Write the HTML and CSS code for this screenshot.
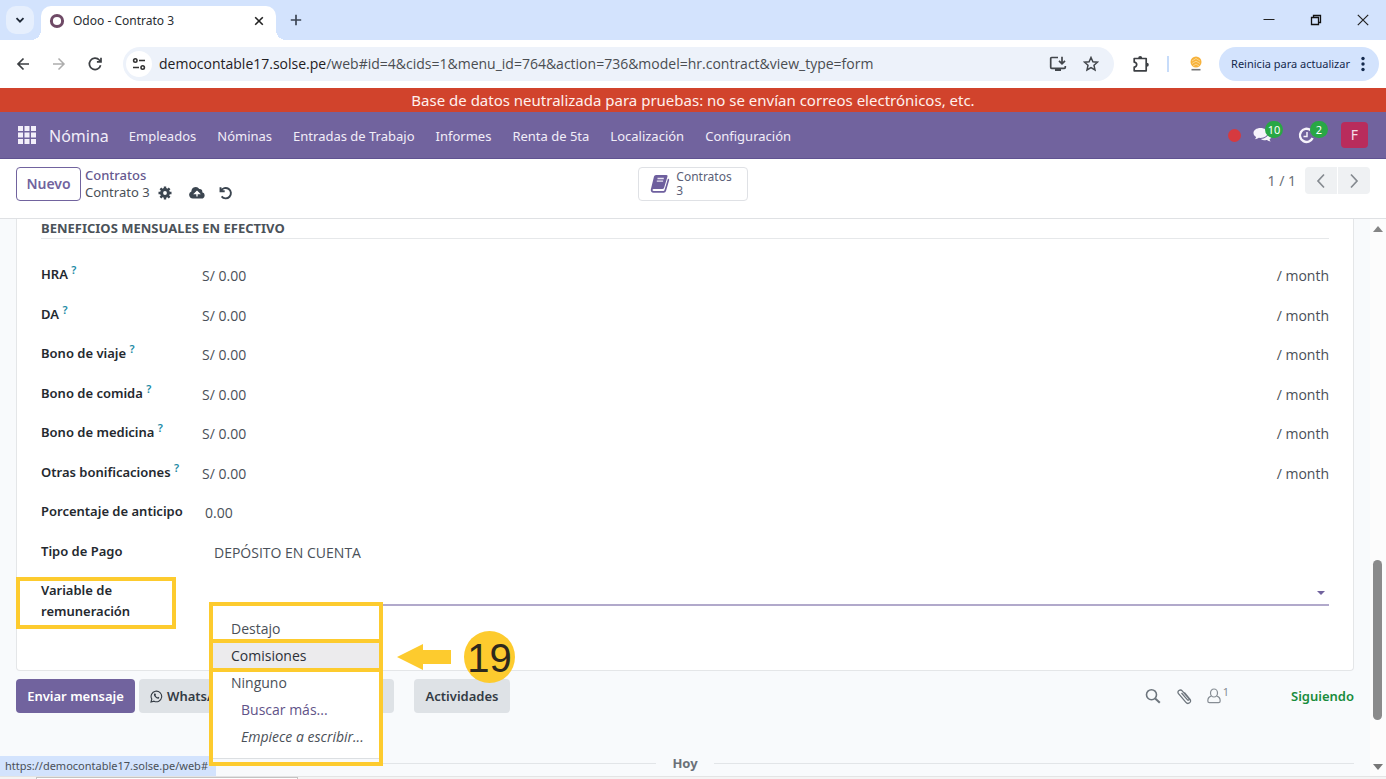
FILE: index.html
```html
<!DOCTYPE html>
<html lang="es">
<head>
<meta charset="utf-8">
<meta name="viewport" content="width=device-width, initial-scale=1">
<title>Odoo - Contrato 3</title>
<link rel="stylesheet" href="styles.css">
</head>
<body>
<div class="tabstrip">
  <button class="tab-search" aria-label="Buscar pestañas"><svg width="12" height="12" viewBox="0 0 12 12"><path d="M2.500 4.200 6 7.700l3.500-3.500" fill="none" stroke="#1f2937" stroke-width="1.800"/></svg></button>
  <div class="tab">
    <svg width="16" height="16" viewBox="0 0 16 16"><circle cx="8" cy="8" r="5.600" fill="none" stroke="#6f4a66" stroke-width="3"/></svg>
    <span class="tab-title">Odoo - Contrato 3</span>
    <button class="tab-close" aria-label="Cerrar"><svg width="10" height="10" viewBox="0 0 10 10"><path d="m1.200 1.200 7.600 7.600m0-7.600L1.200 8.800" stroke="#222" stroke-width="1.600"/></svg></button>
  </div>
  <button class="new-tab" aria-label="Nueva pestaña"><svg width="12" height="12" viewBox="0 0 12 12"><path d="M6 .8v10.400M.8 6h10.400" stroke="#3c4654" stroke-width="1.700"/></svg></button>
  <div class="window-buttons">
    <button aria-label="Minimizar"><svg width="12" height="12" viewBox="0 0 12 12"><path d="M.5 5.500h11" stroke="#222" stroke-width="1"/></svg></button>
    <button aria-label="Restaurar"><svg width="12" height="12" viewBox="0 0 12 12"><path d="M1.500 3.500h7v7h-7zM3.500 3.500v-2h7v7h-2" fill="none" stroke="#111" stroke-width="1.300"/></svg></button>
    <button aria-label="Cerrar ventana"><svg width="12" height="12" viewBox="0 0 12 12"><path d="m.8.800 10.400 10.400m0-10.400L.8 11.200" stroke="#222" stroke-width="1.200"/></svg></button>
  </div>
</div>
<div class="toolbar">
  <button aria-label="Atrás"><svg width="16" height="16" viewBox="0 0 16 16"><path d="M14 8H3m5.500-5.500L3 8l5.500 5.500" fill="none" stroke="#3c3f43" stroke-width="1.700"/></svg></button>
  <button aria-label="Adelante"><svg width="16" height="16" viewBox="0 0 16 16"><path d="M2 8h11M7.500 2.500 13 8l-5.500 5.500" fill="none" stroke="#adadad" stroke-width="1.500"/></svg></button>
  <button aria-label="Recargar"><svg width="16" height="16" viewBox="0 0 16 16"><path d="M13.600 9.200A5.700 5.700 0 1 1 12.300 4L14 5.700M14 1.800v4.100H9.900" fill="none" stroke="#3c3f43" stroke-width="1.700"/></svg></button>
  <div class="omnibox">
    <span class="site-info"><svg width="16" height="16" viewBox="0 0 16 16"><g fill="none" stroke="#333" stroke-width="1.600"><circle cx="4.300" cy="4.500" r="1.700"/><path d="M8 4.500h6M2 11.500h6"/><circle cx="11.700" cy="11.500" r="1.700"/></g></svg></span>
    <div class="url"><span class="host">democontable17.solse.pe</span>/web#id=4&amp;cids=1&amp;menu_id=764&amp;action=736&amp;model=hr.contract&amp;view_type=form</div>
    <button aria-label="Instalar"><svg width="18" height="18" viewBox="0 0 18 18"><path d="M9 2.500H2.700q-1 0-1 1v8.800q0 1 1 1h12.600q1 0 1-1V11M13 1.800v6.500M10 5.800l3 3 3-3" fill="none" stroke="#42464b" stroke-width="1.700"/><path d="M6 14h6v2H6z" fill="#42464b"/></svg></button>
    <button aria-label="Marcador"><svg width="16" height="16" viewBox="0 0 16 16"><path d="m8 1.500 1.900 4.300 4.600.4-3.500 3.100 1 4.600L8 11.500l-4 2.400 1-4.600-3.500-3.100 4.600-.4z" fill="none" stroke="#42464b" stroke-width="1.500"/></svg></button>
  </div>
  <button aria-label="Extensiones"><svg width="18" height="18" viewBox="0 0 18 18"><path d="M2.200 3.500h12v12.300h-12v-3.700a2.500 2.500 0 0 0 0-5z" fill="none" stroke="#3c3f43" stroke-width="1.700" stroke-linejoin="round"/><path d="M6.200 3a2 2 0 0 1 4 0zM14.800 7.700a2 2 0 0 1 0 4z" fill="#3c3f43"/></svg></button>
  <span class="divider"></span>
  <svg class="profile" width="18" height="18" viewBox="0 0 18 18"><circle cx="9" cy="7" r="5.500" fill="#f7b23b"/><path d="m5 6 4-2.500L13 6M5 8.500l4-2.300 4 2.300M6 11l3-2 3 2" fill="none" stroke="#fbd58a"/><path d="M4.500 14.700h9" stroke="#777" stroke-width="1.600"/></svg>
  <button class="restart">Reinicia para actualizar<svg width="4" height="16" viewBox="0 0 4 16"><g fill="#14294d"><circle cx="2" cy="2.500" r="1.700"/><circle cx="2" cy="8" r="1.700"/><circle cx="2" cy="13.500" r="1.700"/></g></svg></button>
</div>
<div class="banner">Base de datos neutralizada para pruebas: no se envían correos electrónicos, etc.</div>
<nav class="navbar">
  <button class="apps" aria-label="Aplicaciones"><svg width="18" height="18" viewBox="0 0 18 18"><path d="M0 0h5v5H0zM6.500 0h5v5h-5zM13 0h5v5h-5zM0 6.500h5v5H0zM6.500 6.500h5v5h-5zM13 6.500h5v5h-5zM0 13h5v5H0zM6.500 13h5v5h-5zM13 13h5v5h-5z" fill="#f3effa"/></svg></button>
  <a class="brand" href="#">Nómina</a>
  <div class="menu">
    <a href="#">Empleados</a><a href="#">Nóminas</a><a href="#">Entradas de Trabajo</a><a href="#">Informes</a><a href="#">Renta de 5ta</a><a href="#">Localización</a><a href="#">Configuración</a>
  </div>
  <div class="systray">
    <span class="record-dot"></span>
    <button class="tray" aria-label="Mensajes"><svg width="19" height="17" viewBox="0 0 19 17"><path d="M7.500 1C3.400 1 .5 3.300.5 6c0 1.700 1 3.100 2.700 4-.2.900-.8 1.600-1.400 2.200 1.500 0 3-.6 4-1.400l1.700.1c4 0 7-2.200 7-4.900S11.500 1 7.500 1z" fill="#f6f3fb"/><path d="M15.600 5.500c1.600.8 2.900 2 2.900 3.700 0 1.400-.8 2.500-2 3.200.2.800.6 1.500 1.200 2-1.500 0-2.800-.5-3.700-1.300-2.500.3-4.800-.1-6.200-1.200 4.300 0 7.800-2.700 7.800-6.400z" fill="#f6f3fb"/></svg><span class="badge">10</span></button>
    <button class="tray" aria-label="Actividades"><svg width="17" height="17" viewBox="0 0 17 17"><path d="M12.500 3A6.600 6.600 0 1 0 14.600 11" fill="none" stroke="#f6f3fb" stroke-width="2.400"/><path d="M9 5v4.500H5.500" fill="none" stroke="#f6f3fb" stroke-width="1.500"/></svg><span class="badge">2</span></button>
    <button class="avatar">F</button>
  </div>
</nav>
<header class="control-panel">
  <div class="cp-left">
    <button class="new-button">Nuevo</button>
    <div class="breadcrumb">
      <a href="#">Contratos</a>
      <div class="current"><span>Contrato 3</span>
        <button aria-label="Acciones"><svg width="14" height="14" viewBox="0 0 14 14"><circle cx="7" cy="7" r="3.400" fill="none" stroke="#3b4550" stroke-width="3"/><path d="M7 .5v2.500M7 11v2.500M.5 7H3M11 7h2.500M2.400 2.400l1.800 1.800M9.800 9.800l1.800 1.800M11.600 2.400 9.800 4.200M4.200 9.800l-1.800 1.800" stroke="#3b4550" stroke-width="2.400"/></svg></button>
        <button class="cloud" aria-label="Guardar"><svg width="16" height="13" viewBox="0 0 16 13"><path d="M4 12.500A3.700 3.700 0 0 1 2.400 5.400 4.300 4.300 0 0 1 10.300 3a2.500 2.500 0 0 1 2.900 3.200 3.200 3.200 0 0 1-.7 6.300z" fill="#3b4550"/><path d="M8 10.500v-4M5.700 7.600 8 5.300l2.300 2.300z" fill="#fff" stroke="#fff" stroke-width="1.300"/></svg></button>
        <button aria-label="Descartar"><svg width="14" height="14" viewBox="0 0 14 14"><path d="M1.500 1.300v4h4.200M2 5a5.200 5.200 0 1 1 .6 5.400" fill="none" stroke="#3b4550" stroke-width="1.900"/></svg></button>
      </div>
    </div>
  </div>
  <button class="stat-button"><svg width="20" height="20" viewBox="0 0 20 20"><path d="M6 1h10.500q1.500 0 1 1.500l-3.300 11q-.4 1.500-2 1.500H3.500q-1.300.2-1 1.300.2.700 1.300.7h9.600q.8 0 1-.8L18 4.500q1.500.5 1.200 1.600L16 17q-.5 1.700-2.200 1.700H3.500Q.5 18.500.8 15.500L4 2.600Q4.400 1 6 1z" fill="#6e5f9e"/><path d="M7.500 4.500h6.300M6.800 7.200h6.300" stroke="#e8e4f2" stroke-width="1.300"/></svg><span class="stat"><span>Contratos</span><span>3</span></span></button>
  <div class="pager"><span>1 / 1</span><div class="pager-buttons"><button aria-label="Anterior"><svg width="10" height="16" viewBox="0 0 10 16"><path d="M8 1.500 2 8l6 6.500" fill="none" stroke="#858a90" stroke-width="1.700"/></svg></button><button aria-label="Siguiente"><svg width="10" height="16" viewBox="0 0 10 16"><path d="m2 1.500 6 6.500-6 6.500" fill="none" stroke="#858a90" stroke-width="1.700"/></svg></button></div></div>
</header>
<main class="content">
  <div class="page">
    <form class="sheet">
      <h2>Beneficios mensuales en efectivo</h2>
      <div class="fields">
        <div class="row"><label for="hra">HRA <sup>?</sup></label><input id="hra" value="S/ 0.00"><span class="unit">/ month</span></div>
        <div class="row"><label for="da">DA <sup>?</sup></label><input id="da" value="S/ 0.00"><span class="unit">/ month</span></div>
        <div class="row"><label for="viaje">Bono de viaje <sup>?</sup></label><input id="viaje" value="S/ 0.00"><span class="unit">/ month</span></div>
        <div class="row"><label for="comida">Bono de comida <sup>?</sup></label><input id="comida" value="S/ 0.00"><span class="unit">/ month</span></div>
        <div class="row"><label for="medicina">Bono de medicina <sup>?</sup></label><input id="medicina" value="S/ 0.00"><span class="unit">/ month</span></div>
        <div class="row"><label for="otras">Otras bonificaciones <sup>?</sup></label><input id="otras" value="S/ 0.00"><span class="unit">/ month</span></div>
        <div class="row"><label for="anticipo">Porcentaje de anticipo</label><input id="anticipo" class="number" value="0.00"></div>
        <div class="row"><label for="pago">Tipo de Pago</label><select id="pago"><option>DEPÓSITO EN CUENTA</option></select></div>
      </div>
      <div class="variable-row">
        <label for="variable">Variable de remuneración</label>
        <div class="combo">
          <input id="variable" role="combobox" aria-expanded="true" aria-controls="opciones">
          <svg width="8" height="4" viewBox="0 0 8 4"><path d="M0 0h8L4 4z" fill="#71639e"/></svg>
          <ul class="dropdown" id="opciones" role="listbox">
            <li role="option">Destajo</li>
            <li role="option" class="active" aria-selected="true">Comisiones</li>
            <li role="option">Ninguno</li>
            <li class="more">Buscar más...</li>
            <li class="hint">Empiece a escribir...</li>
          </ul>
          <div class="callout"><svg width="54" height="26" viewBox="0 0 54 26"><path d="M0 13 26 0v6h28v14H26v6z" fill="#fdcb2e"/></svg><span>19</span></div>
        </div>
      </div>
    </form>
    <section class="chatter">
      <button class="primary">Enviar mensaje</button>
      <button class="whatsapp"><svg width="13" height="13" viewBox="0 0 13 13"><path d="M1 12l.8-2.900A5.300 5.300 0 1 1 4 11.200z" fill="none" stroke="#333b44" stroke-width="1.100"/><path d="M4.300 3.500c-.8 1-.3 2.300.9 3.600s2.700 2 3.700 1.300l.4-1-1.300-.7-.7.700C6.500 7 5.900 6.400 5.500 5.600l.5-.7-.6-1.400z" fill="#333b44"/></svg>WhatsApp</button>
      <button class="note"></button>
      <button class="activities">Actividades</button>
      <div class="chatter-tools">
        <button aria-label="Buscar"><svg width="16" height="16" viewBox="0 0 16 16"><circle cx="6.500" cy="6.700" r="5" fill="none" stroke="#6d757d" stroke-width="1.600"/><path d="m10.200 10.500 4.600 4.300" stroke="#6d757d" stroke-width="2"/></svg></button>
        <button aria-label="Adjuntar"><svg width="16" height="17" viewBox="0 0 16 17"><path d="m5.500 5 6 6.800c.8 1 2.200-.2 1.400-1.200L6.200 2.900C4.400.8.500 3.200 2.500 5.700l7.200 8.500c2.500 2.900 6.500-.2 4.200-3L8.300 4.500" fill="none" stroke="#6d757d" stroke-width="1.300"/></svg></button>
        <button class="followers" aria-label="Seguidores"><svg width="14" height="16" viewBox="0 0 14 16"><path d="M4.300 8.200C.8 9 .8 11.500.8 13q0 1.700 1.700 1.700h9q1.700 0 1.700-1.700c0-1.500 0-4-3.500-4.800" fill="none" stroke="#868d94" stroke-width="1.200"/><ellipse cx="7" cy="5" rx="3.500" ry="4" fill="none" stroke="#868d94" stroke-width="1.200"/></svg><sup>1</sup></button>
        <button class="following">Siguiendo</button>
      </div>
    </section>
    <div class="day"><span>Hoy</span></div>
  </div>
  <div class="scrollbar"><svg width="10" height="6" viewBox="0 0 10 6"><path d="M0 6h10L5 0z" fill="#858585"/></svg><span class="thumb"></span><svg width="10" height="6" viewBox="0 0 10 6"><path d="M0 0h10L5 6z" fill="#777"/></svg></div>
  <div class="status-url">https://democontable17.solse.pe/web#</div>
</main>
<footer class="edge"></footer>
</body>
</html>
```

FILE: styles.css
```css
*, *::before, *::after { box-sizing: border-box; }
body {
  margin: 0;
  height: 100vh;
  display: flex;
  flex-direction: column;
  overflow: hidden;
  background: #fff;
  color: #4a5058;
  font: 14px/20px "Noto Sans", "Open Sans", sans-serif;
}
button, input, select { font: inherit; color: inherit; border: 0; background: none; padding: 0; margin: 0; }
button { display: flex; align-items: center; justify-content: center; flex: none; }
input, select { outline: 0; appearance: none; min-width: 0; }
a { color: inherit; text-decoration: none; }
svg { display: block; flex: none; }

.tabstrip { flex: none; height: 40px; display: flex; align-items: center; background: #d3e3fd; padding: 0 17px 0 6px; }
.tab-search { width: 28px; height: 28px; border-radius: 10px; background: #e6effd; }
.tab { align-self: stretch; margin: 6px 0 0 7px; width: 235px; display: flex; align-items: center; padding: 0 12px 4px 8px; background: #fff; border-radius: 10px 10px 0 0; position: relative; }
.tab::before, .tab::after { content: ""; position: absolute; bottom: 0; width: 10px; height: 10px; }
.tab::before { right: 100%; background: radial-gradient(circle at 0 0, transparent 10px, #fff 10px); }
.tab::after { left: 100%; background: radial-gradient(circle at 100% 0, transparent 10px, #fff 10px); }
.tab-title { flex: 1; margin-left: 8px; font-size: 12px; color: #2a2e33; }
.new-tab { width: 28px; height: 28px; margin-left: 6px; }
.window-buttons { margin-left: auto; display: flex; gap: 35px; }

.toolbar { flex: none; height: 48px; display: flex; align-items: center; padding: 0 7px 0 15px; }
.toolbar > button + button { margin-left: 20px; }
.omnibox { flex: 1; min-width: 0; height: 34px; margin: 0 18px 0 20px; padding: 0 15px 0 3px; display: flex; align-items: center; gap: 16px; border-radius: 17px; background: #edf2fa; }
.site-info { width: 26px; height: 26px; border-radius: 50%; background: #fff; display: flex; align-items: center; justify-content: center; }
.url { flex: 1; margin-left: -9px; color: #4a4d51; font-family: "Open Sans", sans-serif; white-space: nowrap; overflow: hidden; }
.host { color: #1f2023; }
.divider { width: 2px; height: 16px; margin: 0 18px 0 17px; background: #c7dcfa; }
.restart { height: 34px; margin-left: 14px; padding: 0 14px 0 12px; gap: 11px; border-radius: 17px; background: #d3e3fd; color: #14294d; font-size: 11px; }

.banner { flex: none; height: 24px; line-height: 25px; font-size: 15px; text-align: center; background: #d1432c; color: #fff0ec; }

.navbar { flex: none; height: 47px; display: flex; align-items: center; padding: 0 18px; background: #71639e; border-bottom: 1px solid #5f5291; color: #f1edf8; }
.brand { margin-left: 13px; padding-top: 2px; font-size: 16px; }
.menu { display: flex; gap: 21px; margin-left: 20px; padding-top: 2px; font-size: 13px; white-space: nowrap; }
.systray { margin-left: auto; display: flex; align-items: center; }
.record-dot { width: 13px; height: 13px; border-radius: 50%; background: #d63a3f; margin-right: 12px; }
.tray { position: relative; margin-right: 26px; }
.badge { position: absolute; left: 12px; top: -6px; min-width: 18px; height: 17px; border-radius: 9px; background: #28a745; color: #fff; font-size: 11px; line-height: 17px; text-align: center; }
.avatar { width: 27px; height: 26px; border-radius: 4px; background: #b92c5c; color: #f5dde6; }

.control-panel { flex: none; height: 60px; display: grid; grid-template-columns: 1fr auto 1fr; align-items: start; padding: 8px 16px 0; border-bottom: 1px solid #dfe1e4; }
.cp-left { display: flex; gap: 4px; }
.new-button { width: 65px; height: 34px; border: 1px solid #71639e; border-radius: 4px; color: #71639e; font-weight: 600; }
.breadcrumb { font-size: 13px; line-height: 17px; }
.breadcrumb a { color: #66598f; font-weight: 500; }
.current { display: flex; align-items: center; }
.current button { margin-left: 8px; }
.current .cloud { margin: 0 6px 0 17px; }
.stat-button { height: 34px; padding: 0 15px 0 11px; gap: 6px; border: 1px solid #dfe1e5; border-radius: 4px; color: #5b5f78; }
.stat { display: flex; flex-direction: column; font-size: 12px; line-height: 14px; text-align: left; }
.pager { justify-self: end; display: flex; align-items: center; gap: 9px; color: #6b7077; }
.pager-buttons { display: flex; gap: 1px; border-radius: 4px; overflow: hidden; }
.pager-buttons button { width: 32px; height: 27px; background: #eff1f3; }

.content { flex: 1; min-height: 0; display: flex; position: relative; background: #f8fafc; }
.page { flex: 1; min-width: 0; display: flex; flex-direction: column; padding-left: 16px; }
.sheet { flex: 1; min-height: 0; display: flex; flex-direction: column; margin-right: 16px; padding: 0 24px; background: #fff; border: 1px solid #e4e6e8; border-top: 0; border-radius: 0 0 4px 4px; }
.sheet h2 { margin: 0 0 17px; height: 20px; border-bottom: 1px solid #e6e8ea; font-size: 13px; line-height: 18px; font-weight: 700; text-transform: uppercase; color: #4b5259; }
.fields { flex: 1; display: grid; grid-auto-rows: 1fr; }
.row { display: flex; align-items: start; gap: 16px; }
.row label { width: 145px; padding-top: 8px; white-space: nowrap; }
label { flex: none; font-size: 13px; font-weight: 600; color: #24292f; }
label sup { font-size: 11px; line-height: 0; color: #1c8aa5; }
.row input, .row select, .unit { height: 20px; margin-top: 10px; font-family: "Open Sans", sans-serif; }
.row input, .row select { flex: 1; }
.row .number { padding-left: 3px; }
.row select { padding-left: 12px; }
.variable-row { flex: none; height: 98px; display: flex; gap: 16px; }
.variable-row label { position: relative; align-self: start; width: 145px; padding: 8px 30px 0 0; line-height: 21px; }
.variable-row label::after { content: ""; position: absolute; left: -25px; top: 5px; width: 160px; height: 52px; border: 4px solid #fdcb2e; }
.combo { flex: 1; height: 34px; margin-left: 10px; position: relative; display: flex; align-items: center; border-bottom: 2px solid #b1a9cb; }
.combo input { flex: 1; }
.combo > svg { margin: 10px 4px 0 0; }
.dropdown { position: absolute; z-index: 2; left: -3px; top: 30px; width: 174px; height: 164px; margin: 0; padding: 9px 0 0; list-style: none; border: 4px solid #fdcb2e; background: #fff; font-family: "Open Sans", sans-serif; line-height: 27px; box-shadow: inset 0 -3px #f8fafc, inset 0 -4px #dcdfe2; }
.dropdown li { padding-left: 18px; white-space: nowrap; }
.dropdown .active { position: relative; background: #ecebed; color: #2c3138; }
.dropdown .active::after { content: ""; position: absolute; inset: -3px 0; border: solid #fdcb2e; border-width: 4px 0; }
.dropdown .more { padding-left: 28px; color: #5f5388; }
.dropdown .hint { padding-left: 28px; font-style: italic; }
.callout { position: absolute; z-index: 2; left: 185px; top: 59px; display: flex; align-items: center; gap: 13px; }
.callout span { width: 51px; height: 52px; border-radius: 50%; background: #fdcb2e; color: #2d281d; font: 40px/54px "Liberation Sans", sans-serif; text-align: center; }

.chatter { flex: none; display: flex; margin: 8px 16px 0 0; font-weight: 600; font-size: 13px; }
.chatter > button { height: 34px; border-radius: 4px; background: #dee2e6; color: #333b44; }
.chatter .primary { width: 119px; background: #71639e; color: #fff; }
.chatter .whatsapp { width: 104px; margin-left: 4px; gap: 4px; }
.chatter .note { width: 146px; margin-left: 5px; }
.chatter .activities { width: 96px; margin-left: 20px; }
.chatter-tools { margin-left: auto; display: flex; align-items: center; gap: 15px; color: #868d94; }
.followers sup { font-size: 11px; font-weight: 400; line-height: 8px; align-self: start; margin-left: 2px; }
.chatter .following { margin-left: 47px; color: #198c3c; }
.day { flex: none; display: flex; align-items: center; gap: 16px; margin: 40px 16px 3px 0; color: #6b7178; font-weight: 700; font-size: 13px; }
.day::before, .day::after { content: ""; flex: 1; height: 1px; background: #e2e5e8; }
.scrollbar { width: 16px; padding: 7px 3px 6px 3px; display: flex; flex-direction: column; justify-content: space-between; background: #fcfcfc; }
.thumb { width: 9px; height: 160px; margin: auto 0 44px; border-radius: 5px; background: #8b8b8b; }
.status-url { position: absolute; z-index: 1; left: 0; bottom: 0; height: 20px; padding: 0 8px 0 5px; border-radius: 0 4px 0 0; background: #d3e3fd; font-size: 11px; line-height: 20px; }
.edge { flex: none; height: 3px; background: #f4f4f4; border-top: 1px solid #e4e4e4; }
.edge::before { content: ""; display: block; width: 262px; height: 2px; margin-left: 36px; background: #fff; border: 1px solid #c4c4c4; border-bottom: 0; }
```
